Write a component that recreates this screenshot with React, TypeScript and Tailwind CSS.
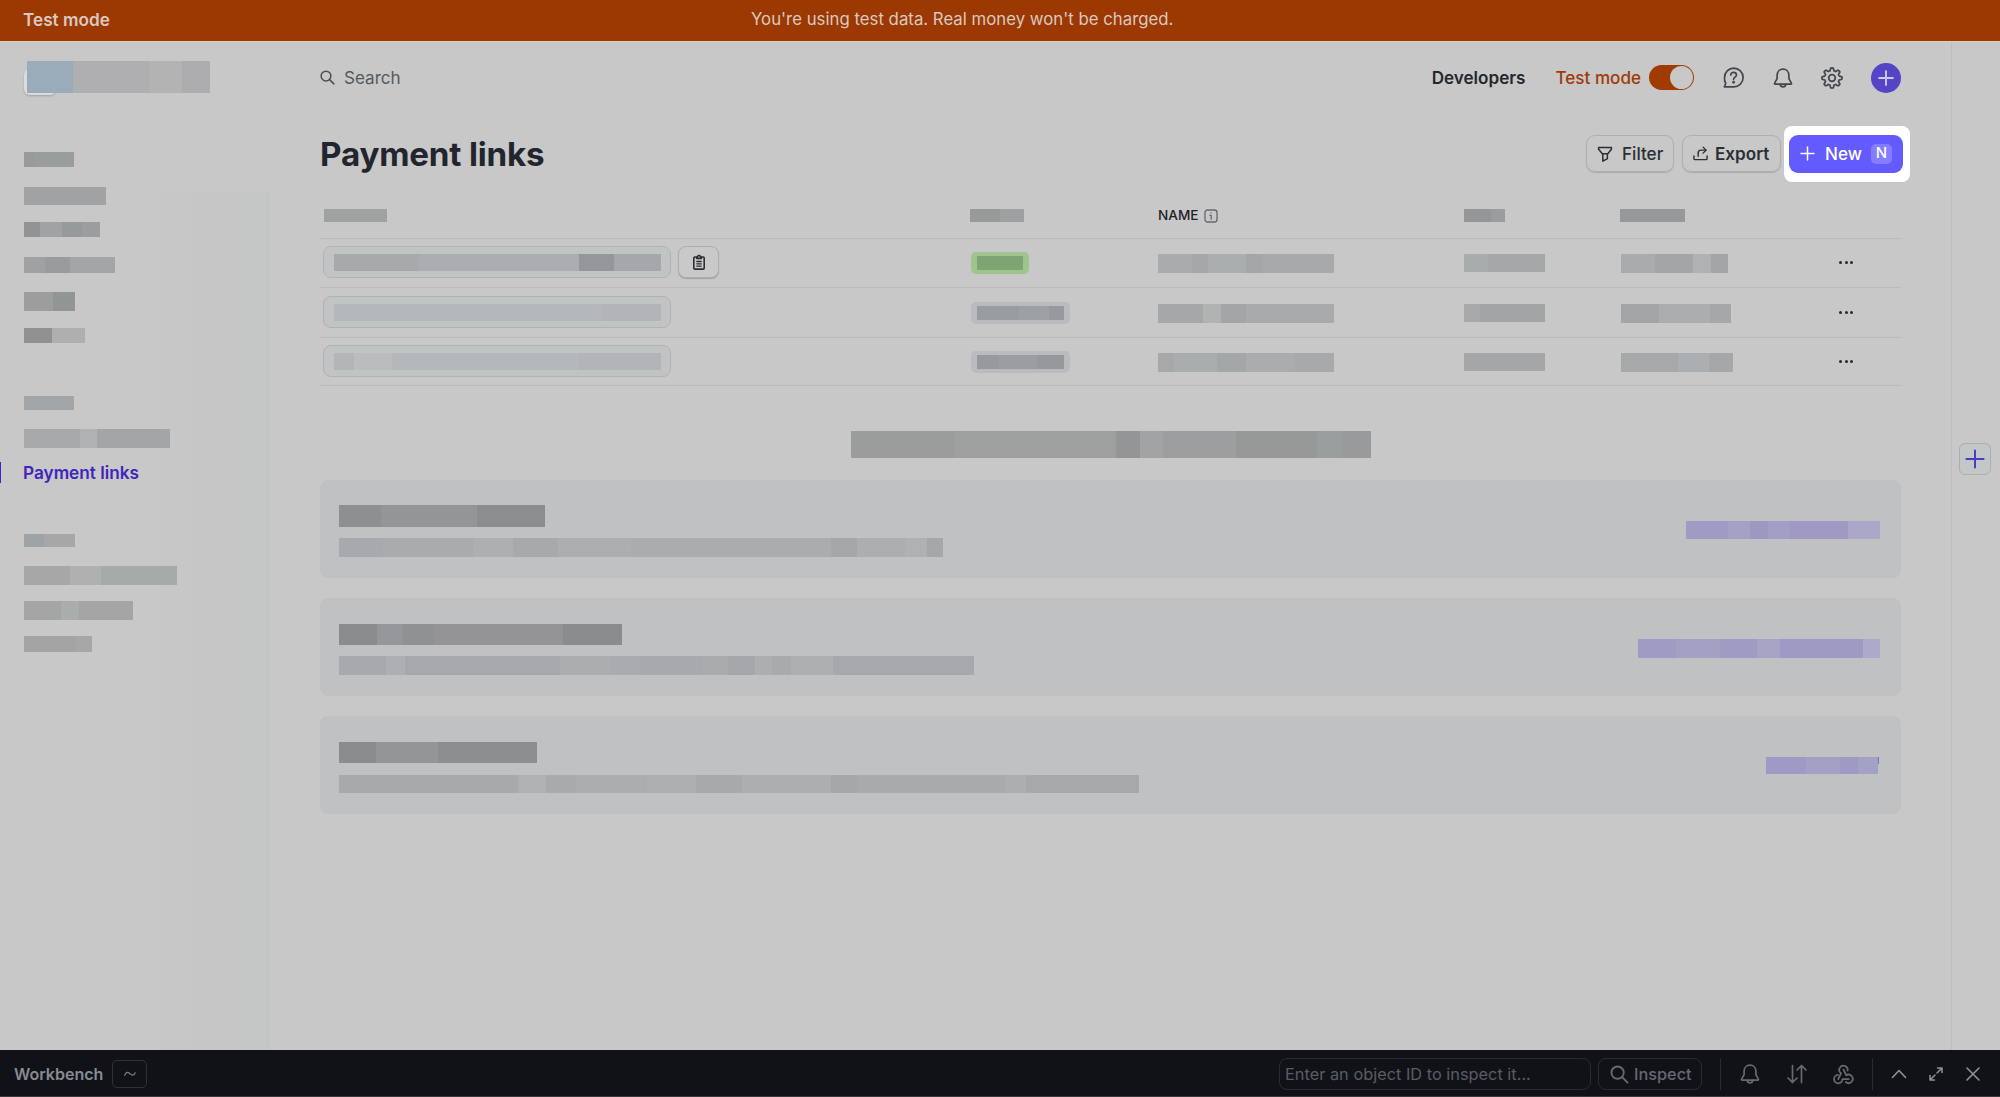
import type { ReactNode } from 'react'
import { clsx } from 'clsx'

interface IconProps {
    className?: string
}

interface LinkRow {
    id: string
    url: string[]
    copy: boolean
    active: boolean
    status: string[]
    name: string[]
    price: string[]
    created: string[]
    rowClass: string
}

interface ResourceCard {
    id: string
    className: string
    title: string[]
    titleClass: string
    text: string[]
    textClass: string
    link: string[]
    linkClass: string
}

// Masked text, drawn as a run of flat blocks
function Redacted({ parts, className }: { parts: string[]; className?: string }) {
    return (
        <div className={clsx('flex shrink-0', className)}>
            {parts.map((part, i) => (
                <span key={i} className={clsx('block h-full shrink-0', part)} />
            ))}
        </div>
    )
}

function Svg({ className, box = 20, width = 1.6, children }: IconProps & { box?: number; width?: number; children: ReactNode }) {
    return (
        <svg
            viewBox={`0 0 ${box} ${box}`}
            fill="none"
            stroke="currentColor"
            strokeWidth={width}
            strokeLinecap="round"
            strokeLinejoin="round"
            className={clsx('shrink-0', className)}
        >
            {children}
        </svg>
    )
}

function SearchIcon({ className }: IconProps) {
    return (
        <Svg className={className} width={2}>
            <circle cx="8" cy="8" r="6.5" />
            <path d="M12.8 12.8 18.5 18.5" />
        </Svg>
    )
}

function PlusIcon({ className, width = 2.4 }: IconProps & { width?: number }) {
    return (
        <Svg className={className} width={width}>
            <path d="M10 1.4V18.6M1.4 10H18.6" />
        </Svg>
    )
}

function HelpIcon({ className }: IconProps) {
    return (
        <Svg className={className}>
            <path d="M10.2 1a8.8 8.8 0 1 1 0 17.9H1.3l1.3-3.2a8.8 8.8 0 0 1-1.1-5.7A8.9 8.9 0 0 1 10.2 1Z" />
            <path d="M7.4 7.6c0-1.5 1.1-2.5 2.7-2.5s2.7 1 2.7 2.4c0 2.2-2.7 2.1-2.7 4.2" />
            <circle cx="10.1" cy="14.6" r=".6" fill="currentColor" />
        </Svg>
    )
}

function BellIcon({ className }: IconProps) {
    return (
        <Svg className={className} width={1.7}>
            <path d="M10 1.2c3.6 0 5.9 2.7 5.9 6.2v3.2l2.5 4.6c.3.5 0 1-.6 1H2.2c-.6 0-.9-.5-.6-1l2.5-4.6V7.4c0-3.5 2.3-6.2 5.9-6.2Z" />
            <path d="M7.2 16.4c.2 1.5 1.3 2.5 2.8 2.5s2.6-1 2.8-2.5" />
        </Svg>
    )
}

// Eight-toothed cog outline
const COG_PATH = (() => {
    const points: string[] = []
    for (let i = 0; i < 96; i++) {
        const angle = (i / 96) * Math.PI * 2
        const wave = Math.max(-1, Math.min(1, Math.cos(angle * 8) * 1.8))
        const r = 7.9 + wave * 1.2
        points.push(`${(10 + r * Math.cos(angle)).toFixed(2)} ${(10 + r * Math.sin(angle)).toFixed(2)}`)
    }
    return `M${points.join('L')}Z`
})()

function CogIcon({ className }: IconProps) {
    return (
        <Svg className={className}>
            <path d={COG_PATH} />
            <circle cx="10" cy="10" r="3" />
        </Svg>
    )
}

function FilterIcon({ className }: IconProps) {
    return (
        <Svg className={className} box={16} width={1.5}>
            <path d="M1.6 1.5h12.8v1.8l-4 5v4.4l-4.6 2.4V8.3L1.6 3.3Z" />
            <path d="M5.5 7.8h5" />
        </Svg>
    )
}

function ExportIcon({ className }: IconProps) {
    return (
        <Svg className={className} box={16} width={1.5}>
            <path d="M1 10.5v3.2c0 .5.3.8.8.8h12.4c.5 0 .8-.3.8-.8v-3.2" />
            <path d="M5.5 11V7.5c0-1.9 1.2-3.1 3.1-3.1H13.6" />
            <path d="M10.8 1.2 14 4.4 10.8 7.6" />
        </Svg>
    )
}

function ClipboardIcon({ className }: IconProps) {
    return (
        <Svg className={className} box={16} width={1.6}>
            <path d="M5.2 3H3.9C3.3 3 2.8 3.5 2.8 4.1v9.9c0 .6.5 1.1 1.1 1.1h8.2c.6 0 1.1-.5 1.1-1.1V4.1c0-.6-.5-1.1-1.1-1.1H10.8" />
            <path d="M5.7 4.4V3h.8a1.5 1.5 0 0 1 3 0h.8v1.4Z" />
            <path d="M5.8 7.5h4.4M5.8 9.8h4.4M5.8 12.1h4.4" strokeWidth={1.3} />
        </Svg>
    )
}

function InfoIcon({ className }: IconProps) {
    return (
        <Svg className={className} box={14} width={1.3}>
            <rect x="1" y="1" width="12" height="12" rx="2.5" />
            <path d="M5.9 6.3H7.2v3.9M7 3.9v.2" />
        </Svg>
    )
}

function WebhookIcon({ className }: IconProps) {
    return (
        <Svg className={className} width={1.7}>
            <path d="M5 14.3 7.6 8.9A4 4 0 1 1 13.9 6.2" />
            <path d="M10 5.4 12.7 10.7A4 4 0 1 1 12.2 17.2" />
            <path d="M15 14.4H9A4 4 0 1 1 4.7 10.4" />
        </Svg>
    )
}

const NAV_TOP = [
    { id: 'home', className: 'mt-[59px] h-[15px]', parts: ['w-[11px] bg-[#989a9b]', 'w-[39px] bg-[#9a9d9e]'] },
    { id: 'balances', className: 'mt-5 h-[18px]', parts: ['w-[82px] bg-[#a0a2a3]'] },
    { id: 'transactions', className: 'mt-[17px] h-[15px]', parts: ['w-4 bg-[#919394]', 'w-[22px] bg-[#a0a2a3]', 'w-5 bg-[#979a9b]', 'w-[18px] bg-[#9c9d9e]'] },
    { id: 'customers', className: 'mt-5 h-4', parts: ['w-[21px] bg-[#a0a1a3]', 'w-[25px] bg-[#999b9c]', 'w-[45px] bg-[#a3a5a7]'] },
    { id: 'products', className: 'mt-[19px] h-[19px]', parts: ['w-[29px] bg-[#9c9d9f]', 'w-[22px] bg-[#929596]'] },
    { id: 'billing', className: 'mt-[17px] h-[15px]', parts: ['w-7 bg-[#8f9192]', 'w-[33px] bg-[#aeafb0]'] },
    { id: 'shortcuts', className: 'mt-[53px] h-3.5', parts: ['w-[50px] bg-[#a3a6a8]'] },
    { id: 'shortcut-1', className: 'mt-[19px] h-[19px]', parts: ['w-14 bg-[#a7a8a9]', 'w-[17px] bg-[#b0b1b2]', 'w-[73px] bg-[#a3a5a6]'] },
]

const NAV_BOTTOM = [
    { id: 'more', className: 'mt-[51px] h-[13px]', parts: ['w-5 bg-[#9ea3a6]', 'w-[31px] bg-[#a5a7a9]'] },
    { id: 'more-1', className: 'mt-[19px] h-[19px]', parts: ['w-[46px] bg-[#a6a7a8]', 'w-[31px] bg-[#afb0b0]', 'w-[76px] bg-[#a7aaab]'] },
    { id: 'more-2', className: 'mt-4 h-[19px]', parts: ['w-[37px] bg-[#a4a5a6]', 'w-[18px] bg-[#a9adad]', 'w-[54px] bg-[#a3a5a6]'] },
    { id: 'more-3', className: 'mt-4 h-4', parts: ['w-[52px] bg-[#a2a4a5]', 'w-4 bg-[#a5a7a8]'] },
]

const ROWS: LinkRow[] = [
    {
        id: 'row-1',
        rowClass: 'h-[49px] pt-[7px]',
        url: ['w-[85px] bg-[#a7a9ab]', 'w-[160px] bg-[#abadb0]', 'w-[35px] bg-[#959699]', 'w-[47px] bg-[#a5a7aa]'],
        copy: true,
        active: true,
        status: ['w-[46px] bg-[#7fa473]'],
        name: ['w-[34px] bg-[#a9abac]', 'w-[16px] bg-[#a5a7a9]', 'w-[38px] bg-[#abaeaf]', 'w-[17px] bg-[#a4a6a8]', 'w-[71px] bg-[#a7a9aa]'],
        price: ['w-[24px] bg-[#a9acac]', 'w-[57px] bg-[#a5a7a8]'],
        created: ['w-[34px] bg-[#a9abac]', 'w-[38px] bg-[#a4a5a7]', 'w-[18px] bg-[#b0b1b3]', 'w-[17px] bg-[#a4a5a6]'],
    },
    {
        id: 'row-2',
        rowClass: 'h-[50px] pt-2',
        url: ['w-[267px] bg-[#b5b8bb]', 'w-[60px] bg-[#b2b4b8]'],
        copy: false,
        active: false,
        status: ['w-[42px] bg-[#999ca0]', 'w-[30px] bg-[#9da1a5]', 'w-[15px] bg-[#97999e]'],
        name: ['w-[45px] bg-[#a5a7a8]', 'w-[18px] bg-[#b1b2b2]', 'w-[25px] bg-[#a3a5a6]', 'w-[88px] bg-[#a8aaab]'],
        price: ['w-4 bg-[#a7a8aa]', 'w-[65px] bg-[#a3a4a6]'],
        created: ['w-[38px] bg-[#a4a5a7]', 'w-[51px] bg-[#acadae]', 'w-[21px] bg-[#a5a7a9]'],
    },
    {
        id: 'row-3',
        rowClass: 'h-[48px] pt-[7px]',
        url: ['w-5 bg-[#b3b5b7]', 'w-[38px] bg-[#babcbe]', 'w-[187px] bg-[#b5b8bb]', 'w-[82px] bg-[#b2b4b7]'],
        copy: false,
        active: false,
        status: ['w-[22px] bg-[#97999e]', 'w-[38px] bg-[#9b9da3]', 'w-[27px] bg-[#96989c]'],
        name: ['w-4 bg-[#a6a8a9]', 'w-[43px] bg-[#a9adad]', 'w-[29px] bg-[#a4a7a8]', 'w-[49px] bg-[#abacad]', 'w-[39px] bg-[#a7a9aa]'],
        price: ['w-[81px] bg-[#a4a6a8]'],
        created: ['w-[57px] bg-[#a7a8a9]', 'w-[31px] bg-[#acafb1]', 'w-6 bg-[#a5a7a8]'],
    },
]

const CARDS: ResourceCard[] = [
    {
        id: 'card-1',
        className: 'pt-[25px]',
        title: ['w-[42px] bg-[#8e8f90]', 'w-[96px] bg-[#949596]', 'w-[68px] bg-[#8c8d8e]'],
        titleClass: 'h-[22px]',
        text: ['w-[44px] bg-[#a7a9ae]', 'w-[90px] bg-[#a9acae]', 'w-10 bg-[#adafb2]', 'w-[45px] bg-[#a8a9ad]', 'w-[73px] bg-[#adaeb1]', 'w-[200px] bg-[#abacae]', 'w-[26px] bg-[#a6a7a9]', 'w-12 bg-[#adaeb0]', 'w-[22px] bg-[#b0b1b4]', 'w-4 bg-[#a6a7a9]'],
        textClass: 'mt-[11px] h-[19px]',
        link: ['w-[42px] bg-[#a09bc4]', 'w-[22px] bg-[#a5a0c5]', 'w-[18px] bg-[#9d98c2]', 'w-[22px] bg-[#a39ec5]', 'w-[58px] bg-[#9f99c3]', 'w-8 bg-[#aba7c9]'],
        linkClass: 'mt-4 mr-[21px] h-[18px]',
    },
    {
        id: 'card-2',
        className: 'pt-[26px]',
        title: ['w-[38px] bg-[#8b8c8e]', 'w-[26px] bg-[#96979a]', 'w-[31px] bg-[#909193]', 'w-[129px] bg-[#949496]', 'w-[59px] bg-[#8b8c8e]'],
        titleClass: 'h-[21px]',
        text: ['w-[47px] bg-[#a8a9ad]', 'w-[19px] bg-[#aeafb2]', 'w-[155px] bg-[#a7a8ac]', 'w-[51px] bg-[#acadaf]', 'w-[29px] bg-[#a9abaf]', 'w-[63px] bg-[#a7a9ac]', 'w-[25px] bg-[#aaabad]', 'w-[27px] bg-[#a6a7aa]', 'w-[17px] bg-[#adaeb0]', 'w-[19px] bg-[#a9aaac]', 'w-[42px] bg-[#aeafb0]', 'w-[141px] bg-[#a7a8ab]'],
        textClass: 'mt-[11px] h-[19px]',
        link: ['w-[38px] bg-[#a09bc4]', 'w-[44px] bg-[#a4a0c4]', 'w-[37px] bg-[#a09bc4]', 'w-[23px] bg-[#a7a3c4]', 'w-[83px] bg-[#9f9ac3]', 'w-[17px] bg-[#aca9ca]'],
        linkClass: 'mt-[15px] mr-[21px] h-[19px]',
    },
    {
        id: 'card-3',
        className: 'pt-[26px]',
        title: ['w-[37px] bg-[#8b8c8e]', 'w-[62px] bg-[#949596]', 'w-[99px] bg-[#8d8e90]'],
        titleClass: 'h-[21px]',
        text: ['w-[179px] bg-[#a8a9ac]', 'w-7 bg-[#b0b1b3]', 'w-[30px] bg-[#a9aaac]', 'w-[71px] bg-[#acadb1]', 'w-[49px] bg-[#adafb2]', 'w-[46px] bg-[#a8a9ac]', 'w-[42px] bg-[#adaeb0]', 'w-[47px] bg-[#adaeb2]', 'w-[26px] bg-[#a6a7a9]', 'w-[148px] bg-[#a9aaad]', 'w-[21px] bg-[#adaeb1]', 'w-[113px] bg-[#a7a8aa]'],
        textClass: 'mt-3 h-[18px]',
        link: ['w-10 bg-[#9f99c5]', 'w-[34px] bg-[#a4a0c5]', 'w-[18px] bg-[#9f9ac4]', 'w-5 bg-[#a2a2c6]', 'w-px bg-[#7a70bd] max-h-[7px]'],
        linkClass: 'mt-[15px] mr-[22px] h-[17px]',
    },
]

const GRID = 'grid grid-cols-[650px_188px_306px_156px_219px_1fr]'

function Sidebar() {
    return (
        <aside className="flex w-[270px] shrink-0 flex-col bg-[linear-gradient(to_right,#c8c8c8_160px,#c7c7c7_160px,#c7c7c7_192px,#c6c6c6_192px,#c6c6c6_240px,#c5c6c6_240px,#c5c6c6_264px,#c3c4c7_269px,#c8c8c8_270px)] bg-[position:0_150px] bg-no-repeat pt-[19px]">
            <div className="relative ml-6 h-8">
                <span className="absolute left-0 top-2 h-[26px] w-8 rounded-md bg-[#dcdcdc] shadow-[0_1px_2px_rgba(0,0,0,0.2)]" />
                <Redacted
                    className="relative ml-[3px] h-8"
                    parts={['w-[46px] bg-[#9aabb9]', 'w-[77px] bg-[#afafb1]', 'w-8 bg-[#b3b3b4]', 'w-[28px] bg-[#adadaf]']}
                />
            </div>
            <nav className="flex flex-col">
                {NAV_TOP.map((item) => (
                    <Redacted key={item.id} parts={item.parts} className={clsx('ml-6', item.className)} />
                ))}
                <a className="mt-[13px] flex h-[22px] items-center text-[17.2px] font-semibold text-[#3f25bb]">
                    <span className="h-[21px] w-[1px] bg-[#3f25bb]" />
                    <span className="ml-[22px] mt-px">Payment links</span>
                </a>
                {NAV_BOTTOM.map((item) => (
                    <Redacted key={item.id} parts={item.parts} className={clsx('ml-6', item.className)} />
                ))}
            </nav>
        </aside>
    )
}

function TopBar() {
    return (
        <div className="flex h-[71px] items-center text-[17.1px] text-[#43474d]">
            <SearchIcon className="size-[15px] text-[#4b5056]" />
            <span className="ml-[9px] text-[#54595f]">Search</span>
            <span className="ml-auto font-semibold text-[#24272c]">Developers</span>
            <span className="ml-[30px] font-medium text-[#9e3b07]">Test mode</span>
            <span className="ml-2 flex h-[25px] w-[45px] items-center justify-end rounded-full bg-[#a03c02] p-px">
                <span className="size-[23px] rounded-full bg-[#c8c8c8]" />
            </span>
            <HelpIcon className="ml-[29px] size-[21px]" />
            <BellIcon className="ml-[29px] size-5" />
            <CogIcon className="ml-[28px] size-[22px]" />
            <span className="ml-[28px] flex size-[30px] items-center justify-center rounded-full bg-[#5345c6] text-[#cbc8e8]">
                <PlusIcon className="size-4" />
            </span>
        </div>
    )
}

function TitleRow() {
    const button = 'flex h-[37px] items-center rounded-[9px] border border-[#adafb1] text-[17.1px] text-[#2b2e33] shadow-[0_1px_1px_rgba(0,0,0,0.15)]'

    return (
        <div className="flex h-[82px] items-center pb-px">
            <h1 className="mt-[2px] text-[33.2px] font-bold tracking-[-0.2px] text-[#23252e]">Payment links</h1>
            <div className="ml-auto flex items-center">
                <button className={clsx(button, 'w-[88px] pl-[10px] font-medium')}>
                    <FilterIcon className="size-4" />
                    <span className="ml-[9px] mt-px">Filter</span>
                </button>
                <button className={clsx(button, 'ml-2 w-[99px] pl-[10px] font-semibold')}>
                    <ExportIcon className="size-[15px]" />
                    <span className="ml-[7px] mt-px">Export</span>
                </button>
                {/* Spotlight around the primary action */}
                <div className="-mr-[9px] ml-[3px] flex h-[56px] w-[126px] items-center rounded-lg bg-white pl-[5px]">
                    <button className="flex h-[38px] w-[114px] items-center rounded-[9px] bg-[#635bff] pl-[11px] text-[17.1px] font-medium text-white">
                        <PlusIcon className="size-[15px]" width={2} />
                        <span className="ml-[10px] mt-px">New</span>
                        <kbd className="ml-[9px] flex h-5 w-[21px] items-center justify-center rounded-[5px] bg-[#847dff] font-[Inter] text-[15px] font-medium">
                            N
                        </kbd>
                    </button>
                </div>
            </div>
        </div>
    )
}

function LinksTable() {
    return (
        <div>
            <div className={clsx(GRID, 'h-[44px] border-b border-[#b9bbbc] pt-[14px]')}>
                <Redacted className="ml-1 h-[13px]" parts={['w-[63px] bg-[#a0a1a1]']} />
                <Redacted className="h-[13px]" parts={['w-[30px] bg-[#989999]', 'w-6 bg-[#9fa0a1]']} />
                <div className="flex h-[13px] items-center">
                    <span className="text-[13.6px] font-medium text-[#1f2226]">NAME</span>
                    <InfoIcon className="ml-[5px] size-[14px] text-[#64686d]" />
                </div>
                <Redacted className="h-[13px]" parts={['w-[27px] bg-[#959697]', 'w-[14px] bg-[#9b9c9d]']} />
                <Redacted className="h-[13px]" parts={['w-[65px] bg-[#969899]']} />
            </div>
            {ROWS.map((row) => (
                <div key={row.id} className={clsx(GRID, 'border-b border-[#b9bbbc]', row.rowClass)}>
                    <div className="flex pl-[3px]">
                        <div className="flex h-8 w-[348px] items-center rounded-lg border border-[#b0b3b5] bg-[#c1c4c4] pl-[10px]">
                            <Redacted className="mt-px h-[17px] w-[327px]" parts={row.url} />
                        </div>
                        {row.copy && (
                            <button className="ml-[7px] flex h-8 w-[41px] items-center justify-center rounded-lg border border-[#adafb1] bg-[#c9c9c9] text-[#2b2e33] shadow-[0_1px_1px_rgba(0,0,0,0.2)]">
                                <ClipboardIcon className="size-4" />
                            </button>
                        )}
                    </div>
                    <div className="pt-[6px]">
                        <div className={clsx('ml-px flex h-[22px] w-fit items-center rounded-[5px] px-[6px]', row.active ? 'bg-[#a1c48e]' : 'bg-[#b9bbbe]')}>
                            <Redacted className="h-[14px]" parts={row.status} />
                        </div>
                    </div>
                    <Redacted className="mt-2 h-[19px]" parts={row.name} />
                    <Redacted className="mt-2 h-[18px]" parts={row.price} />
                    <Redacted className="ml-px mt-2 h-[19px]" parts={row.created} />
                    <div className="mt-[15px] flex h-[3px] gap-[2.5px]">
                        <span className="size-[3px] rounded-full bg-[#26292d]" />
                        <span className="size-[3px] rounded-full bg-[#26292d]" />
                        <span className="size-[3px] rounded-full bg-[#26292d]" />
                    </div>
                </div>
            ))}
        </div>
    )
}

function Workbench() {
    return (
        <footer className="flex h-[47px] shrink-0 items-center border-b border-[#3a3a3c] bg-[#101217] pt-[2px] text-[#656972]">
            <span className="ml-[14px] text-[16px] font-semibold text-[#888b93]">Workbench</span>
            <span className="ml-[9px] flex h-7 w-[35px] items-center justify-center rounded-[5px] border border-[#303238]">
                <Svg className="h-3 w-3 text-[#777a82]" box={12} width={1.3}>
                    <path d="M.8 7.3C1.6 4.3 3.5 3.6 5.3 5.3S9.7 8.5 11.2 4.8" />
                </Svg>
            </span>
            <div className="ml-auto flex h-8 w-[312px] items-center rounded-lg border border-[#292b30] pl-[5px] text-[16.35px] text-[#595d65]">
                Enter an object ID to inspect it...
            </div>
            <button className="ml-[7px] flex h-8 w-[104px] items-center rounded-lg border border-[#292b30] pl-[11px] text-[16.3px] font-medium">
                <SearchIcon className="size-[19px]" />
                <span className="ml-[5px]">Inspect</span>
            </button>
            <span className="ml-[18px] h-8 w-px bg-[#292b30]" />
            <BellIcon className="ml-[19px] size-5" />
            <Svg className="ml-[27px] size-5" width={1.7}>
                <path d="M5.5 1.5v17M1 14l4.5 4.5L10 14M14.5 18.5v-17M10 6l4.5-4.5L19 6" />
            </Svg>
            <WebhookIcon className="ml-[26px] size-[21px]" />
            <span className="ml-[18px] h-8 w-px bg-[#292b30]" />
            <Svg className="ml-[18px] size-4 text-[#8f929a]" box={16}>
                <path d="M1.5 11.5 8 4.5l6.5 7" />
            </Svg>
            <Svg className="ml-[21px] size-4 text-[#8f929a]" box={16} width={1.5}>
                <path d="M9.5 2H14v4.5M14 2 9 7M6.5 14H2V9.5M2 14l5-5" />
            </Svg>
            <Svg className="ml-[21px] mr-[19px] size-4 text-[#8f929a]" box={16}>
                <path d="m2 2 12 12M14 2 2 14" />
            </Svg>
        </footer>
    )
}

export default function App() {
    return (
        <div className="flex h-[1097px] w-[2000px] flex-col overflow-hidden bg-[#c8c8c8] font-[Inter,sans-serif]">
            {/* Test mode banner */}
            <header className="flex h-[42px] shrink-0 items-center border-b border-[#e3c9ba] bg-[#9c3802] pb-px text-[16.8px] text-[#d9c9c0]">
                <span className="w-[751px] pl-[23px] text-[17.2px] font-semibold">Test mode</span>
                <span>You&apos;re using test data. Real money won&apos;t be charged.</span>
            </header>

            <div className="flex h-[1008px] shrink-0">
                <Sidebar />
                <main className="flex-1 border-r border-[#bebebe] pl-[50px] pr-[50px]">
                    <TopBar />
                    <TitleRow />
                    <LinksTable />
                    <Redacted
                        className="mt-[45px] h-[27px] justify-center"
                        parts={['w-[104px] bg-[#9b9d9d]', 'w-[161px] bg-[#9ea0a0]', 'w-6 bg-[#949597]', 'w-[23px] bg-[#a2a3a5]', 'w-[73px] bg-[#9c9e9f]', 'w-[81px] bg-[#979999]', 'w-[25px] bg-[#9b9e9f]', 'w-[29px] bg-[#999a9b]']}
                    />
                    <div className="mt-[22px] flex flex-col gap-5">
                        {CARDS.map((card) => (
                            <div key={card.id} className={clsx('flex h-[98px] justify-between rounded-lg bg-[#bfc1c2] pl-[19px]', card.className)}>
                                <div>
                                    <Redacted parts={card.title} className={card.titleClass} />
                                    <Redacted parts={card.text} className={card.textClass} />
                                </div>
                                <Redacted parts={card.link} className={card.linkClass} />
                            </div>
                        ))}
                    </div>
                </main>
                <aside className="flex w-12 shrink-0 flex-col items-center pr-[2px] pt-[401px]">
                    <button className="flex size-8 items-center justify-center rounded-md border border-[#abadae] bg-[#c4c7c7] text-[#4a3cc0]">
                        <PlusIcon className="size-5" width={2} />
                    </button>
                </aside>
            </div>

            <Workbench />
        </div>
    )
}
